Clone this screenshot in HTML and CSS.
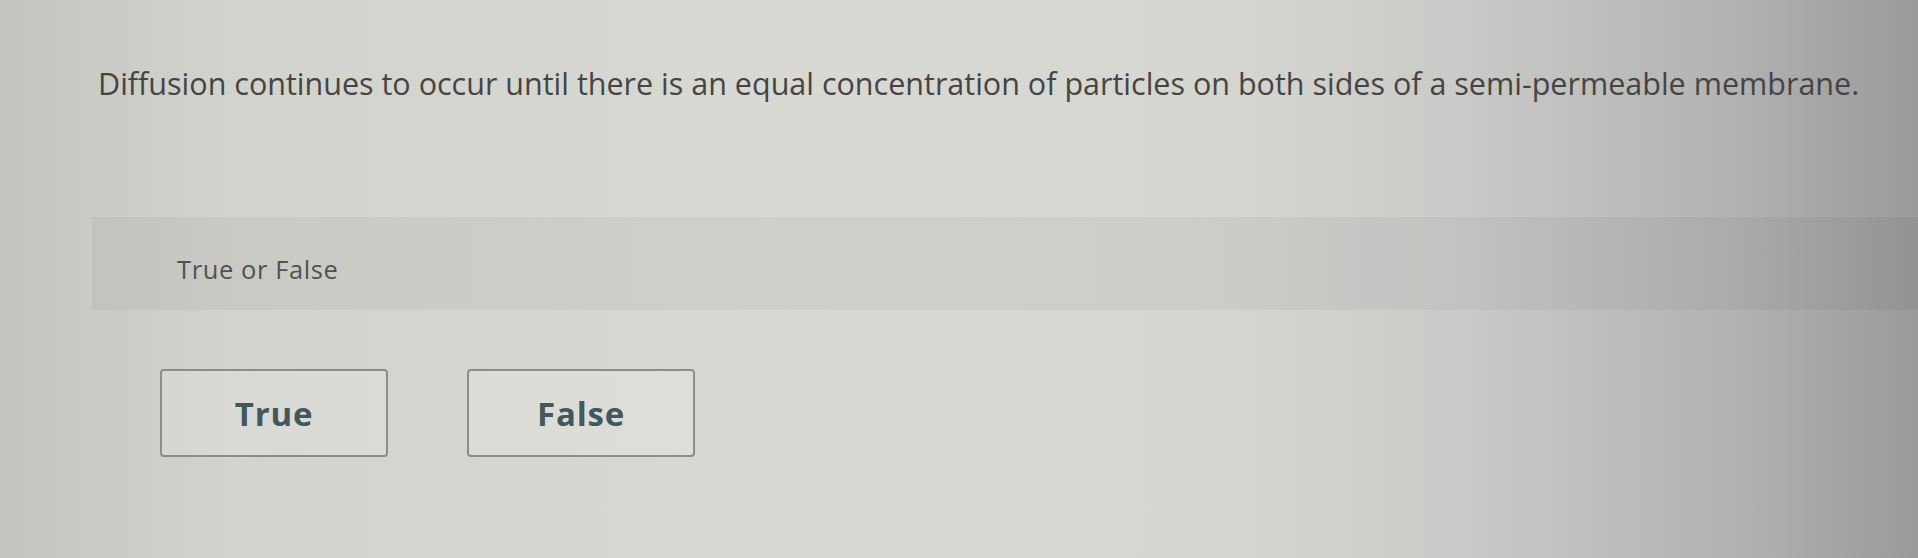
FILE: index.html
```html
<!DOCTYPE html>
<html lang="en">
<head>
    <meta charset="UTF-8">
    <meta name="viewport" content="width=device-width, initial-scale=1.0">
    <title>True or False</title>
    <link rel="stylesheet" href="styles.css">
</head>
<body>
    <div class="question">
        <p class="prompt">Diffusion continues to occur until there is an equal concentration of particles on both sides of a semi-permeable membrane.</p>

        <div class="panel">
            <div class="panel-head">True or False</div>
            <div class="choices">
                <button type="button" class="choice">True</button>
                <button type="button" class="choice">False</button>
            </div>
        </div>
    </div>
</body>
</html>
```

FILE: styles.css
```css
html, body {
    height: 100%;
}
body {
    margin: 0;
    font-family: "Open Sans", "Liberation Sans", sans-serif;
    color: #454544;
    background: linear-gradient(90deg, #c4c4c0 0%, #d3d3ce 12%, #d9d9d4 40%, #d7d7d2 62%, #cacac8 76%, #b3b3b3 90%, #9a9a9a 100%);
    overflow: hidden;
}
.question {
    padding-top: 65px;
}
.prompt {
    margin: 0 0 0 98px;
    font-size: 30.5px;
    line-height: 36px;
    white-space: nowrap;
}
.panel {
    margin: 116px 0 0 92px;
}
.panel-head {
    height: 83px;
    padding: 10px 0 0 85px;
    display: flex;
    align-items: center;
    font-size: 25.5px;
    letter-spacing: 0.6px;
    color: #525252;
    background: rgba(0, 0, 0, 0.04);
}
.choices {
    display: flex;
    gap: 79px;
    padding: 59px 0 0 68px;
}
.choice {
    width: 228px;
    height: 88px;
    border: 2px solid #8c8c8a;
    border-radius: 4px;
    background: rgba(255, 255, 255, 0.15);
    font-family: "Open Sans", "Liberation Sans", sans-serif;
    font-size: 33px;
    font-weight: 700;
    letter-spacing: 0.8px;
    color: #42585d;
    cursor: pointer;
}
```
